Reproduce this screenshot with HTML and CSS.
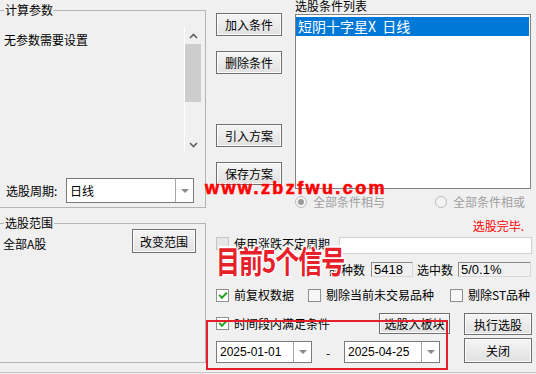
FILE: index.html
```html
<!DOCTYPE html>
<html>
<head>
  <title>条件选股</title>
  <link rel="stylesheet" href="styles.css">
</head>
<body>
  <div class="dlg">
    <div class="main">
      <div class="left">
        <div class="grp grp-params">
          <div class="grp-title">计算参数</div>
          <div class="param-box">
            <div class="param-text">无参数需要设置</div>
            <div class="vscroll">
              <div class="sb-btn">
                <svg width="9" height="6" viewBox="0 0 9 6"><path d="M1 5 L4.5 1.5 L8 5" fill="none" stroke="#606060" stroke-width="1.6"/></svg>
              </div>
              <div class="sb-thumb"></div>
              <div class="sb-track"></div>
              <div class="sb-btn">
                <svg width="9" height="6" viewBox="0 0 9 6"><path d="M1 1 L4.5 4.5 L8 1" fill="none" stroke="#606060" stroke-width="1.6"/></svg>
              </div>
            </div>
          </div>
          <div class="period-row">
            <span class="lbl">选股周期:</span>
            <div class="combo combo-period">
              <span class="combo-val">日线</span>
              <span class="combo-btn"><i class="tri"></i></span>
            </div>
          </div>
        </div>
        <div class="grp grp-range">
          <div class="grp-title">选股范围</div>
          <div class="range-row">
            <span class="range-text">全部A股</span>
            <button class="btn btn-range">改变范围</button>
          </div>
        </div>
      </div>

      <div class="right">
        <div class="cond-area">
          <div class="cond-btns">
            <button class="btn btn-add">加入条件</button>
            <button class="btn btn-del">删除条件</button>
            <button class="btn btn-load">引入方案</button>
            <button class="btn btn-save">保存方案</button>
          </div>
          <div class="cond-list-col">
            <div class="list-label">选股条件列表</div>
            <div class="cond-list">
              <div class="item sel">短阴十字星X&nbsp;&nbsp;日线</div>
            </div>
          </div>
        </div>

        <div class="radio-row">
          <label class="radio-opt opt-and"><i class="radio on"></i>全部条件相与</label>
          <label class="radio-opt"><i class="radio"></i>全部条件相或</label>
        </div>

        <div class="status">选股完毕.</div>

        <div class="row row-period">
          <i class="cb cb-off"></i>
          <span class="cb-text">使用涨跌不定周期</span>
          <div class="field"></div>
        </div>

        <div class="row row-count">
          <span>品种数</span>
          <div class="ro-box box-total">5418</div>
          <span class="lbl-sel">选中数</span>
          <div class="ro-box box-sel">5/0.1%</div>
        </div>

        <div class="row row-opts">
          <label class="opt opt-1"><i class="cb on"></i><span class="cb-text">前复权数据</span></label>
          <label class="opt opt-2"><i class="cb"></i><span class="cb-text">剔除当前未交易品种</span></label>
          <label class="opt"><i class="cb"></i><span class="cb-text">剔除ST品种</span></label>
        </div>

        <div class="run-area">
          <div class="run-left">
            <div class="row row-time">
              <i class="cb on"></i>
              <span class="cb-text">时间段内满足条件</span>
              <button class="btn btn-block">选股入板块</button>
            </div>
            <div class="row row-dates">
              <div class="combo combo-date">
                <span class="combo-val">2025-01-01</span>
                <span class="combo-btn"><i class="tri"></i></span>
              </div>
              <span class="dash">-</span>
              <div class="combo combo-date">
                <span class="combo-val">2025-04-25</span>
                <span class="combo-btn"><i class="tri"></i></span>
              </div>
            </div>
          </div>
          <div class="run-btns">
            <button class="btn btn-run">执行选股</button>
            <button class="btn btn-close">关闭</button>
          </div>
        </div>
      </div>
    </div>
    <div class="foot-line"></div>

    <div class="watermark">www.zbzfwu.com</div>
    <div class="stamp">目前5个信号</div>
    <div class="mark-box"></div>
  </div>
</body>
</html>
```

FILE: styles.css
```css
body {
  margin: 0;
  background-color: #f0f0f0;
  font-family: "Noto Sans CJK SC", "Liberation Sans", sans-serif;
  font-size: 12px;
  line-height: 14px;
  color: #000;
  overflow: hidden;
}
.dlg {
  position: relative;
  width: 536px;
  height: 374px;
}
.main {
  display: flex;
  height: 372px;
}
.left {
  width: 206px;
  flex: none;
}
.right {
  width: 330px;
  flex: none;
}
.foot-line {
  border-top: 1px solid #c8c8c8;
}

/* group boxes */
.grp {
  box-sizing: border-box;
  width: 206px;
  border: 1px solid #b4b4b4;
  border-left: none;
}
.grp-params {
  margin-top: 10px;
  height: 198px;
}
.grp-range {
  margin-top: 15px;
  height: 140px;
}
.grp-title {
  width: fit-content;
  margin: -8px 0 0 4px;
  padding: 0 1px;
  height: 14px;
  background: #f0f0f0;
}
.param-box {
  display: flex;
  height: 126px;
  margin: 10px 4px 0 4px;
}
.param-text {
  flex: 1;
  padding-top: 6px;
}
.vscroll {
  width: 16px;
  border-left: 1px solid #fff;
  display: flex;
  flex-direction: column;
}
.sb-btn {
  height: 17px;
  display: flex;
  align-items: center;
  justify-content: center;
}
.sb-thumb {
  height: 58px;
  background: #cdcdcd;
}
.sb-track {
  flex: 1;
}
.period-row {
  display: flex;
  align-items: center;
  margin-top: 25px;
  padding-left: 6px;
}
.lbl {
  width: 60px;
}

/* combo boxes */
.combo {
  box-sizing: border-box;
  display: flex;
  background: #fff;
  border: 1px solid #7a7a7a;
}
.combo-period {
  width: 128px;
  height: 25px;
}
.combo-val {
  flex: 1;
  display: flex;
  align-items: center;
  padding-left: 3px;
}
.combo-btn {
  width: 17px;
  border-left: 1px solid #a8a8a8;
  display: flex;
  align-items: center;
  justify-content: center;
}
.tri {
  width: 0;
  height: 0;
  border-left: 4px solid transparent;
  border-right: 4px solid transparent;
  border-top: 4px solid #8a8a8a;
}
.combo-date {
  width: 96px;
  height: 22px;
}

.range-row {
  display: flex;
  justify-content: space-between;
  align-items: flex-start;
  margin: -1px 9px 0 3px;
}
.range-text {
  margin-top: 8px;
}

/* buttons */
.btn {
  box-sizing: border-box;
  border: 1px solid #707070;
  background: linear-gradient(#f5f5f5, #e1e1e1);
  font-family: inherit;
  font-size: 12px;
  color: #000;
  padding: 0;
  box-shadow: inset 0 0 0 1px #fbfbfb;
}
.btn-range {
  width: 64px;
  height: 24px;
}

.cond-area {
  display: flex;
  height: 189px;
}
.cond-btns {
  width: 66px;
  margin-left: 10px;
  display: flex;
  flex-direction: column;
}
.cond-btns .btn {
  height: 23px;
}
.btn-add { margin-top: 13px; }
.btn-del { margin-top: 15px; }
.btn-load { margin-top: 50px; }
.btn-save { margin-top: 15px; }
.cond-list-col {
  width: 236px;
  margin-left: 13px;
}
.list-label {
  margin-top: -1px;
}
.cond-list {
  box-sizing: border-box;
  margin-top: 1px;
  height: 175px;
  background: #fff;
  border: 1px solid #828282;
  padding: 2px 1px 0 0;
}
.item {
  height: 19px;
  line-height: 19px;
  font-size: 14px;
  padding-left: 2px;
}
.item.sel {
  background: #0078d7;
  color: #fff;
}

/* radios */
.radio-row {
  display: flex;
  align-items: center;
  height: 14px;
  margin-top: 6px;
  padding-left: 89px;
  color: #a0a0a0;
}
.radio-opt {
  display: flex;
  align-items: center;
}
.opt-and {
  width: 140px;
}
.radio {
  box-sizing: border-box;
  width: 12px;
  height: 12px;
  border: 1px solid #bcbcbc;
  border-radius: 50%;
  background: #f4f4f4;
  margin-right: 6px;
  display: flex;
  align-items: center;
  justify-content: center;
}
.radio.on::after {
  content: "";
  width: 6px;
  height: 6px;
  border-radius: 50%;
  background: #9a9a9a;
}

.status {
  margin-top: 10px;
  text-align: right;
  padding-right: 12px;
  color: #ff0000;
}

/* rows */
.row {
  display: flex;
  align-items: center;
}
.row-period {
  height: 17px;
  margin-top: 4px;
  padding: 0 4px 0 10px;
  align-items: flex-start;
}
.row-period .cb-text {
  line-height: 13px;
}
.field {
  box-sizing: border-box;
  width: 193px;
  height: 17px;
  margin-left: auto;
  background: #fff;
  border: 1px solid #d0d0d0;
}
.cb {
  box-sizing: border-box;
  width: 13px;
  height: 13px;
  flex: none;
  border: 1px solid #8e8e8e;
  background: #f6f6f6;
  display: flex;
  align-items: center;
  justify-content: center;
}
.cb.cb-off {
  border-color: #c4c4c4;
  background: #e6e6e6;
}
.cb.on {
  background: #fff;
}
.cb.on::after {
  content: "";
  width: 6px;
  height: 3px;
  border-left: 2px solid #22a222;
  border-bottom: 2px solid #22a222;
  transform: translate(0, -1px) rotate(-45deg);
}
.cb-text {
  margin-left: 5px;
}

.row-count {
  height: 15px;
  margin-top: 8px;
  padding-left: 123px;
}
.ro-box {
  box-sizing: border-box;
  height: 15px;
  line-height: 13px;
  border: 1px solid #8a8a8a;
  border-right-color: #d8d8d8;
  border-bottom-color: #d8d8d8;
  padding-left: 2px;
  background: #f0f0f0;
  font-family: "Liberation Sans", sans-serif;
  font-size: 13px;
}
.box-total {
  width: 42px;
  margin-left: 6px;
}
.lbl-sel {
  margin-left: 4px;
}
.box-sel {
  width: 73px;
  margin-left: 5px;
}

.row-opts {
  height: 14px;
  margin-top: 11px;
  padding-left: 10px;
}
.opt {
  display: flex;
  align-items: center;
}
.opt-1 { width: 92px; }
.opt-2 { width: 142px; }

.run-area {
  display: flex;
  margin-top: 11px;
}
.run-left {
  width: 244px;
}
.row-time {
  height: 21px;
  padding-left: 10px;
}
.btn-block {
  width: 71px;
  height: 21px;
  margin-left: auto;
}
.row-dates {
  margin-top: 7px;
  padding-left: 10px;
}
.combo-date .combo-val {
  font-family: "Liberation Sans", sans-serif;
  font-size: 12px;
}
.dash {
  width: 32px;
  text-align: center;
  padding-top: 2px;
}
.run-btns {
  margin-left: auto;
  margin-right: 4px;
  width: 68px;
  display: flex;
  flex-direction: column;
}
.btn-run {
  height: 22px;
}
.btn-close {
  height: 25px;
  margin-top: 3px;
}

/* pasted-on annotations */
.watermark {
  position: absolute;
  left: 205px;
  top: 178px;
  font-family: "Liberation Sans", sans-serif;
  font-weight: bold;
  font-size: 18px;
  letter-spacing: 2.4px;
  color: #ff0000;
  line-height: 20px;
  -webkit-text-stroke: 0.6px #ff0000;
}
.stamp {
  position: absolute;
  left: 216px;
  top: 239px;
  font-family: "Noto Sans CJK SC", sans-serif;
  font-weight: bold;
  font-size: 24px;
  line-height: 32px;
  letter-spacing: -1px;
  color: #e8202a;
  transform: scaleY(1.3);
  transform-origin: 0 0;
  text-shadow: 1px 0 0 #fff, -1px 0 0 #fff, 0 1px 0 #fff, 0 -1px 0 #fff, 1px 1px 1px #fff, -1px -1px 1px #fff;
}
.mark-box {
  position: absolute;
  left: 206px;
  top: 320px;
  width: 242px;
  height: 50px;
  box-sizing: border-box;
  border: 2px solid #e3202a;
}
```
